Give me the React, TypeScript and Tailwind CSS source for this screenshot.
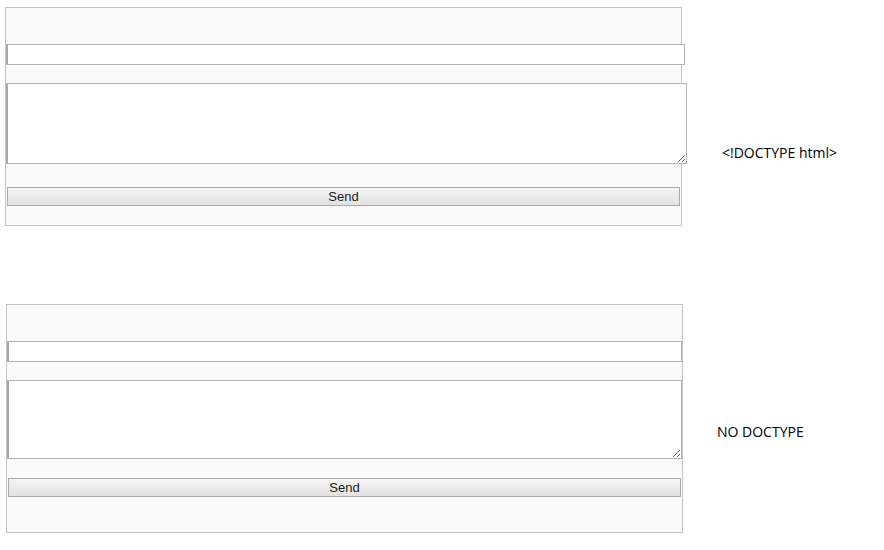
import React from "react";

const Panel = ({
  variant,
}: {
  variant: "doctype" | "quirks";
}) => {
  const quirks = variant === "quirks";
  return (
    <div
      className={`border border-[#c4c4c4] bg-[#fafafa] flex flex-col ${
        quirks ? "w-[677px] h-[229px] pt-[36px]" : "w-[677px] h-[219px] pt-[36px]"
      }`}
    >
      <input
        type="text"
        readOnly
        className={`h-[21px] bg-white border border-[#b4b4b4] border-l-2 border-l-[#a8a8a8] outline-none ${
          quirks ? "w-[675px]" : "w-[679px]"
        }`}
      />
      <textarea
        readOnly
        className={`mt-[18px] bg-white border border-[#b4b4b4] border-l-2 border-l-[#a8a8a8] outline-none block ${
          quirks ? "w-[675px] h-[79px]" : "w-[681px] h-[81px]"
        }`}
      />
      <button
        className={`ml-[1px] h-[19px] border border-[#aaaaaa] bg-gradient-to-b from-[#f5f5f5] to-[#e1e1e1] text-[13px] leading-none text-[#1a1a1a] font-['Liberation_Sans',Arial,sans-serif] ${
          quirks ? "mt-[19px] w-[673px]" : "mt-[23px] w-[673px]"
        }`}
      >
        Send
      </button>
    </div>
  );
};

export default function App() {
  return (
    <div className="w-[884px] h-[550px] bg-white font-['Open_Sans','Noto_Sans',sans-serif] text-[14px] text-black">
      {/* with doctype */}
      <div className="flex pt-[7px] pl-[5px]">
        <Panel variant="doctype" />
        <span className="ml-[40px] mt-[136px] leading-[20px] h-[20px]">
          &lt;!DOCTYPE html&gt;
        </span>
      </div>

      {/* quirks mode */}
      <div className="flex mt-[78px] pl-[6px]">
        <Panel variant="quirks" />
        <span className="ml-[34px] mt-[118px] leading-[20px] h-[20px]">
          NO DOCTYPE
        </span>
      </div>
    </div>
  );
}
